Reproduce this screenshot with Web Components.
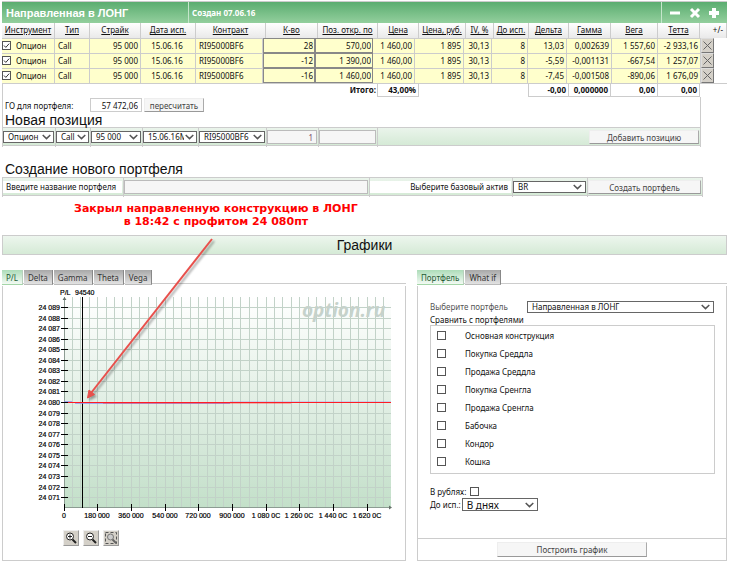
<!DOCTYPE html>
<html lang="ru">
<head>
<meta charset="utf-8">
<title>Направленная в ЛОНГ</title>
<style>
html, body { margin: 0; background: #fff; }
body { position: relative; font: 8px/11px "Noto Sans", "Open Sans", sans-serif; color: #111; --line: #ccc; }
</style>
</head>
<body>
<option-desk></option-desk>
<script>
const define = (name, html, setup) => {
  const template = document.createElement('template');
  template.innerHTML = html;
  customElements.define(name, class extends HTMLElement {
    constructor() {
      super();
      this.attachShadow({ mode: 'open' }).append(template.content.cloneNode(true));
    }
    connectedCallback() {
      if (setup && !this.ready) { this.ready = true; setup(this, this.shadowRoot); }
    }
  });
};

/* Drop-down with a chevron */
define('desk-select', `
<style>
:host { display: grid; height: 12px; min-width: 0; }
select { grid-area: 1/1; appearance: none; box-sizing: border-box; width: 100%; min-width: 0; height: 100%; margin: 0;
  padding: 0 12px 0 4px; border: 1px solid #666; border-radius: 0; background: #fff; color: #111; font: inherit; line-height: 10px; }
svg { grid-area: 1/1; justify-self: end; align-self: center; margin-right: 3px; width: 9px; height: 6px; pointer-events: none; }
:host([wide]) svg { margin-right: 4px; }
</style>
<select><option></option></select>
<svg viewBox="0 0 9 6"><path d="M.7 1 4.5 4.6 8.3 1" fill="none" stroke="#555" stroke-width="1.5"/></svg>`,
(el, root) => {
  root.querySelector('option').textContent = el.getAttribute('value');
  root.querySelector('select').setAttribute('aria-label', el.getAttribute('label'));
});

/* Text box */
define('desk-input', `
<style>
:host { display: block; min-width: 0; height: 14px; }
input { box-sizing: border-box; display: block; width: 100%; height: 100%; margin: 0; padding: 0 3px; border: 1px solid #bbb;
  border-radius: 0; background: #f6f6f6; color: #7a4a6a; font: inherit; text-align: right; }
:host([plain]) input { background: #fff; color: #111; border-color: #ccc; }
:host([cell]) { height: 15px; }
:host([cell]) input { background: #ffffcc; color: #111; border-color: #888; padding-right: 1px; }
</style>
<input type="text">`,
(el, root) => {
  const i = root.querySelector('input');
  i.value = el.getAttribute('value') || '';
  i.setAttribute('aria-label', el.getAttribute('label'));
});

/* Raised button */
define('desk-button', `
<style>
:host { display: block; height: 14px; }
button { box-sizing: border-box; width: 100%; height: 100%; margin: 0; padding: 0; border: 1px solid #eee;
  border-right-color: #aaa; border-bottom-color: #999; background: #f6f6f6; color: #444; font: inherit; line-height: 11px; }
</style>
<button type="button"><slot></slot></button>`);

/* Labelled tick box */
define('desk-check', `
<style>
:host { display: block; }
label { display: flex; align-items: center; }
:host([reverse]) label { flex-direction: row-reverse; justify-content: flex-end; gap: 4px; }
:host([option]) label { gap: 19px; }
:host([row]) label { gap: 5px; }
input { appearance: none; flex: none; box-sizing: border-box; width: 9px; height: 9px; margin: 0; border: 1px solid #555; background: #fff; display: grid; }
span.box { display: grid; flex: none; }
span.box > * { grid-area: 1/1; }
svg { width: 9px; height: 9px; pointer-events: none; display: none; }
input:checked + svg { display: block; }
</style>
<label><span class="box"><input type="checkbox"><svg viewBox="0 0 9 9"><path d="M2 4.5 3.8 6.4 7.2 2.6" fill="none" stroke="#333"/></svg></span><slot></slot></label>`,
(el, root) => { root.querySelector('input').checked = el.hasAttribute('checked'); });

/* Green title bar of the portfolio */
define('portfolio-title', `
<style>
:host { display: grid; grid-template-columns: 186fr 473fr 66fr; height: 21px; border-top: 1px solid #ccc;
  background: linear-gradient(#5bad70, #93cf9d); color: #fff; font-weight: bold; align-items: stretch; }
h1, div { margin: 0; display: flex; align-items: center; }
h1 { font: bold 11px "Liberation Sans", sans-serif; padding-left: 4px; white-space: nowrap; }
div { border-left: 1px solid #c5e6cb; padding-left: 3px; }
.tools { justify-content: space-between; padding: 0 7px; }
button { width: 12px; height: 12px; padding: 0; border: 0; background: none; display: block; }
svg { display: block; width: 12px; height: 12px; fill: none; stroke: #fff; stroke-width: 3; }
</style>
<h1>Направленная в ЛОНГ</h1><div>Создан 07.06.16</div>
<div class="tools">
<button aria-label="Свернуть"><svg viewBox="0 0 12 12"><path d="M1 6H11"/></svg></button>
<button aria-label="Закрыть"><svg viewBox="0 0 12 12"><path d="M2 2 10 10M10 2 2 10"/></svg></button>
<button aria-label="Добавить"><svg viewBox="0 0 12 12"><path d="M1 6H11M6 1V11" stroke-width="4"/></svg></button>
</div>`);

/* Table of the open positions */
define('position-table', `
<style>
:host { display: block; }
table, thead, tbody, tfoot { display: block; }
tr { display: grid; grid-template-columns: var(--cols); }
thead, tfoot { --cols: 53fr 35fr 51fr 55fr 70fr 52fr 60fr 41fr 47fr 28fr 35fr 40fr 42fr 47fr 42fr 27fr; }
tbody { --cols: 53fr 35fr 51fr 55fr 67fr 52fr 58fr 42fr 49fr 28fr 36fr 39fr 45fr 46fr 43fr 13fr 13fr; border-bottom: 1px solid #ccc; }
th, td { box-sizing: border-box; min-width: 0; padding: 0; white-space: nowrap; text-align: right; }
th { height: 15px; font-weight: normal; text-align: center; line-height: 13px; border-right: 1px solid #ccc; background: linear-gradient(#fff, #e9e9e9); text-decoration: underline; text-underline-offset: 1px; }
th:last-child { text-align: right; padding-right: 3px; text-decoration: none; }
tbody td { height: 15px; line-height: 13px; padding-right: 2px; border: solid #ccc; border-width: 1px 1px 0 0; background: #ffffcc; }
tbody td.date { text-align: center; }
tbody td.edit { border: 0; padding: 0; }
tbody td.l { text-align: left; padding-left: 3px; }
tbody td.l:first-child { padding-left: 0; }
tbody td.del { padding: 0; border: 0; background: none; }
td.del button { display: block; box-sizing: border-box; width: 100%; height: 15px; padding: 0; border: 1px solid #ddd; border-right-color: #777; border-bottom-color: #777; background: #d4d0c8; }
td.del svg { display: block; margin: auto; width: 9px; height: 9px; stroke: #666; }
tbody td.end { background: none; border: 0; }
tfoot td { height: 13px; line-height: 11px; font-weight: bold; padding-right: 2px; }
tfoot td.sum { border: solid #ccc; border-width: 0 1px 1px 0; }
tfoot td.first { border-left-width: 1px; margin-left: -1px; }
tfoot .total { grid-column: 1 / 8; }
tfoot .gap { grid-column: 9 / 12; }
</style>
<table><thead><tr></tr></thead><tbody></tbody>
<tfoot><tr><td class="total">Итого:</td><td class="sum first">43,00%</td><td class="gap"></td><td class="sum first">-0,00</td><td class="sum">0,000000</td><td class="sum">0,00</td><td class="sum">0,00</td></tr></tfoot></table>`,
(el, root) => {
  root.querySelector('thead tr').innerHTML = ['Инструмент', 'Тип', 'Страйк', 'Дата исп.', 'Контракт', 'К-во', 'Поз. откр. по', 'Цена', 'Цена, руб.', 'IV, %', 'До исп.', 'Дельта', 'Гамма', 'Вега', 'Тетта', '+/-']
    .map(t => `<th scope="col">${t}</th>`).join('');
  const rows = [
    ['28', '570,00', '13,03', '0,002639', '1 557,60', '-2 933,16'],
    ['-12', '1 390,00', '-5,59', '-0,001131', '-667,54', '1 257,07'],
    ['-16', '1 460,00', '-7,45', '-0,001508', '-890,06', '1 676,09']];
  root.querySelector('tbody').innerHTML = rows.map(([qty, open, ...greeks]) => `<tr>
<td class="l"><desk-check checked row>Опцион</desk-check></td><td class="l">Call</td><td>95 000</td><td class="date">15.06.16</td><td class="l">RI95000BF6</td>
<td class="edit"><desk-input cell label="К-во" value="${qty}"></desk-input></td>
<td class="edit"><desk-input cell label="Поз. откр. по" value="${open}"></desk-input></td>
<td>1 460,00</td><td>1 895</td><td>30,13</td><td>8</td>${greeks.map(g => `<td>${g}</td>`).join('')}
<td class="del"><button aria-label="Удалить"><svg viewBox="0 0 9 9"><path d="M.5.5 8.5 8.5M8.5.5.5 8.5"/></svg></button></td><td class="end"></td></tr>`).join('');
});

/* Green strip of form cells, split by vertical rules */
define('field-strip', `
<style>
:host { display: grid; height: 20px; border-left: 1px solid #ccc;
  background: linear-gradient(#ccc 1px, #eaf4eb 1px, #d5ead6 18px, #ccc 18px, #ccc 19px, #fff 19px); }
::slotted(*) { box-sizing: border-box; height: 20px; border-right: 1px solid #ccc; padding: 3px 1px 0 0; }
::slotted(.open) { border-right: 0; }
</style>
<slot></slot>`);

/* Group of tabs with a framed body below */
define('tab-panel', `
<style>
:host { display: flex; flex-direction: column; min-width: 0; }
nav { display: flex; gap: 1px; height: 15px; background: linear-gradient(#fff 13px, #ccc 13px, #ccc 14px, #fff 14px); }
button { box-sizing: border-box; height: 15px; margin: 0; padding: 0 4px; border: solid #888; border-width: 0 1px 0 0; border-bottom: 1px solid #bbb;
  background: linear-gradient(#a8a8a8, #e2e2e2); color: #333; font: inherit; line-height: 13px; }
button[aria-selected=true] { background: linear-gradient(#addcb9, #f2faf3); border-color: #b9cfbd; border-bottom-color: #a5d6a9; color: #245a34; }
section { flex: 1; display: flex; flex-direction: column; margin-top: 1px; border: 1px solid #ccc; border-top: 0; }
</style>
<nav role="tablist"></nav><section role="tabpanel"><slot></slot></section>`,
(el, root) => {
  root.querySelector('nav').innerHTML = el.getAttribute('tabs').split('|')
    .map((t, i) => `<button role="tab" aria-selected="${i === 0}">${t}</button>`).join('');
});

/* Profit and loss chart */
define('profit-chart', `
<style>
:host { display: block; }
svg { display: block; width: 100%; }
text { font: 7px "Liberation Sans", sans-serif; fill: #000; stroke: #000; stroke-width: .2; }
.mark { font: italic bold 19px "Open Sans", sans-serif; fill: #c6d2cb; stroke: none; }
.y { text-anchor: end; } .x { text-anchor: middle; }
</style>
<svg viewBox="0 0 402 240" role="img" aria-label="P/L">
<defs><linearGradient id="g" x1="0" y1="0" x2="0" y2="1"><stop offset="0" stop-color="#fff"/><stop offset=".8" stop-color="#cfe5d4"/><stop offset="1" stop-color="#c3e0c9"/></linearGradient></defs>
<rect x="61" y="11" width="327" height="211" fill="url(#g)"/>
<g id="grid" fill="#c2d2c8"></g>
<path d="M61.5 11V222M61 221.5H388" stroke="#8c9c92"/>
<path d="M386 219.5 389 221.5 386 223.5ZM59.5 14 61.5 11 63.5 14Z" fill="#66706a"/>
<text class="mark" x="299" y="31">option.ru</text>
<g id="ticks" fill="#000"></g>
<rect x="79" y="11" width="1" height="211"/>
<g fill="#8c8cf0" opacity=".7"><rect x="61" y="115" width="8" height="1"/><rect x="72" y="117" width="155" height="1"/><rect x="227" y="115" width="161" height="1" opacity=".4"/></g>
<rect x="65" y="116" width="323" height="1" fill="#ff1c24"/>
<rect x="100" y="117" width="188" height="1" fill="#ff1c24" opacity=".3"/>
<g id="labels"></g>
<text x="57" y="9">P/L</text><text x="72" y="9">94540</text>
</svg>`,
(el, root) => {
  const at = id => root.getElementById(id);
  const box = (x, y, w, h) => `<rect x="${x}" y="${y}" width="${w}" height="${h}"/>`;
  let grid = '', ticks = '', labels = '';
  for (let i = 0; i < 19; i++) {
    const y = Math.round(21 + i * 10.56);
    grid += box(61, y, 327, 1);
    ticks += box(58, y, 7, 1);
    labels += `<text class="y" x="57" y="${y + 3}">24 0${89 - i}</text>`;
  }
  for (let i = 1; i < 39; i++) grid += box(Math.floor(61 + i * 8.42), 11, 1, 211);
  ['0', '180 000', '360 000', '540 000', '720 000', '900 000', '1 080 0C', '1 260 0C', '1 440 0C', '1 620 0C'].forEach((t, i) => {
    const x = Math.floor(61 + i * 33.68);
    ticks += box(x, 218, 1, 7);
    labels += `<text class="x" x="${x}" y="232">${t}</text>`;
  });
  at('grid').innerHTML = grid; at('ticks').innerHTML = ticks; at('labels').innerHTML = labels;
});

/* Magnifier buttons below the chart */
define('zoom-tools', `
<style>
:host { display: flex; gap: 4px; padding: 4px 60px 14px; }
button { box-sizing: border-box; width: 16px; height: 16px; padding: 0; border: 1px solid #eee; border-right-color: #999; border-bottom-color: #999; background: #d4d0c8; }
svg { display: block; width: 14px; height: 14px; fill: none; stroke: #222; }
</style>
<button aria-label="Увеличить"><svg viewBox="0 0 14 14"><circle cx="6" cy="5.5" r="3.5" fill="#fff"/><path d="M4 5.5H8M6 3.5V7.5"/><path d="M8.5 8.5 12 12" stroke-width="2"/></svg></button>
<button aria-label="Уменьшить"><svg viewBox="0 0 14 14"><circle cx="6" cy="5.5" r="3.5" fill="#fff"/><path d="M4 5.5H8"/><path d="M8.5 8.5 12 12" stroke-width="2"/></svg></button>
<button aria-label="Выделить область"><svg viewBox="0 0 14 14"><path d="M1.5 1.5H12.5V12.5H1.5Z" stroke="#555" stroke-dasharray="3 2"/><circle cx="6.5" cy="6" r="3" fill="#ccc" stroke="#777"/><path d="M8.5 8.5 12 12" stroke="#666" stroke-width="2"/></svg></button>`);

/* Settings of the chart */
define('chart-form', `
<style>
:host { flex: 1; display: flex; flex-direction: column; }
.body { padding: 14px 11px 0 12px; }
.pick { display: grid; grid-template-columns: 97px 1fr; align-items: center; height: 13px; color: #555; padding-right: 1px; }
.cap { height: 12px; line-height: 13px; }
.list { border: 1px solid #ccc; padding: 0 6px 3px; margin-bottom: 10px; }
.list desk-check { height: 18px; display: flex; align-items: center; }
.days { display: flex; align-items: center; gap: 1px; height: 13px; }
.days desk-select { width: 76px; height: 13px; font-size: 10px; }
.rub { height: 14px; display: flex; align-items: center; }
footer { margin-top: auto; border-top: 1px solid #ccc; height: 21px; display: flex; align-items: center; justify-content: center; }
footer desk-button { width: 150px; height: 15px; }
</style>
<div class="body">
<div class="pick"><span>Выберите портфель</span><desk-select wide label="Выберите портфель" value="Направленная в ЛОНГ"></desk-select></div>
<div class="cap">Сравнить с портфелями</div>
<div class="list"></div>
<desk-check class="rub" reverse>В рублях:</desk-check>
<div class="days"><span>До исп.:</span><desk-select wide label="До исп." value="В днях"></desk-select></div>
</div>
<footer><desk-button>Построить график</desk-button></footer>`,
(el, root) => {
  root.querySelector('.list').innerHTML = ['Основная конструкция', 'Покупка Среддла', 'Продажа Среддла', 'Покупка Сренгла', 'Продажа Сренгла', 'Бабочка', 'Кондор', 'Кошка']
    .map(t => `<desk-check option>${t}</desk-check>`).join('');
});

/* Whole page */
define('option-desk', `
<style>
:host { display: block; padding: 1px 10px 6px 2px; }
.card { border-left: 1px solid #ccc; }
.inner { margin-right: 26px; border-right: 1px solid #ccc; }
position-table { margin-left: -1px; }
.calc { display: grid; grid-template-columns: 87fr 52fr 2fr 60fr 496fr; align-items: center; height: 16px; }
.calc span { padding-left: 2px; }
h2 { margin: 0; padding-left: 3px; font: 14px/16px "Liberation Sans", sans-serif; }
.calc + h2 { height: 14px; line-height: 14px; padding-left: 2px; }
.new { grid-template-columns: 53fr 35fr 52fr 56fr 68fr 52fr 59fr 211fr 111fr; margin-left: -1px; }
.new .sel { padding-top: 4px; }
.create { grid-template-columns: 121fr 246fr 143fr 75fr 115fr; margin-right: 24px; }
.create .text { padding-top: 4px; }
.create label { display: block; height: 12px; background: #fff; padding: 0 3px; white-space: nowrap; }
.create .r label { text-align: right; }
.second { margin-top: 14px; }
.note { width: 59%; margin: 5px 0 7px; text-align: center; font: bold 11px/13px "DejaVu Sans", sans-serif; color: #f00; }
.band { height: 18px; border: 1px solid #ccc; background: linear-gradient(#edf6ee, #d5ead6); text-align: center; font: 14px/18px "Liberation Sans", sans-serif; margin-bottom: 15px; }
.panels { display: grid; grid-template-columns: 404fr 310fr; gap: 11px; }
.arrow { position: absolute; left: 80px; top: 234px; width: 140px; height: 170px; pointer-events: none; filter: drop-shadow(2px 2px 1px rgba(0,0,0,.35)); }
</style>
<portfolio-title></portfolio-title>
<div class="card">
<position-table></position-table>
<div class="inner">
<div class="calc"><span>ГО для портфеля:</span><desk-input plain label="ГО для портфеля" value="57 472,06"></desk-input><i></i><desk-button>пересчитать</desk-button></div>
<h2>Новая позиция</h2>
<field-strip class="new">
<div class="sel"><desk-select label="Инструмент" value="Опцион"></desk-select></div>
<div class="sel"><desk-select label="Тип" value="Call"></desk-select></div>
<div class="sel"><desk-select label="Страйк" value="95 000"></desk-select></div>
<div class="sel"><desk-select label="Дата исп." value="15.06.16M"></desk-select></div>
<div class="sel"><desk-select label="Контракт" value="RI95000BF6"></desk-select></div>
<div><desk-input label="К-во" value="1"></desk-input></div>
<div><desk-input label="Поз. откр. по"></desk-input></div>
<div class="open"></div>
<div class="open"><desk-button>Добавить позицию</desk-button></div>
</field-strip>
</div>
</div>
<h2 class="second">Создание нового портфеля</h2>
<field-strip class="create">
<div class="text"><label>Введите название портфеля</label></div>
<div><desk-input label="Введите название портфеля"></desk-input></div>
<div class="text r"><label>Выберите базовый актив</label></div>
<div class="text"><desk-select wide label="Выберите базовый актив" value="BR"></desk-select></div>
<div><desk-button>Создать портфель</desk-button></div>
</field-strip>
<div class="note">Закрыл направленную конструкцию в ЛОНГ<br>в 18:42 с профитом 24 080пт</div>
<div class="band">Графики</div>
<div class="panels">
<tab-panel tabs="P/L|Delta|Gamma|Theta|Vega"><profit-chart></profit-chart><zoom-tools></zoom-tools></tab-panel>
<tab-panel tabs="Портфель|What if"><chart-form></chart-form></tab-panel>
</div>
<svg class="arrow" viewBox="0 0 140 170"><path d="M132 5 11 159" stroke="#e8504c" stroke-width="2" fill="none"/><path d="M7.5 164 9 156 14.5 160.5Z" fill="#e8504c" stroke="#e8504c"/></svg>`);
</script>
</body>
</html>
